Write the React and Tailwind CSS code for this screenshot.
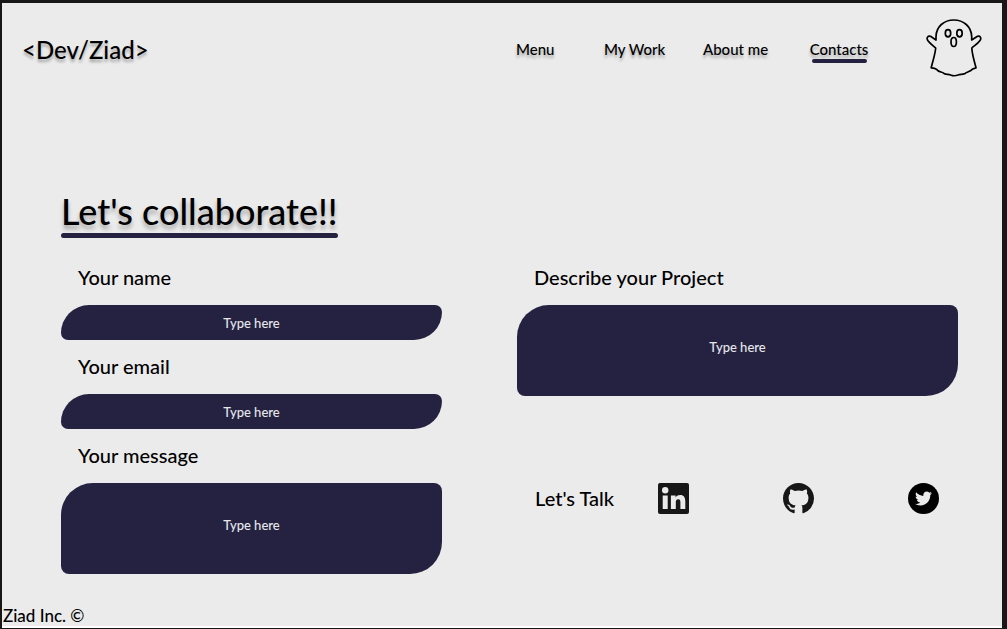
import { FaTwitter } from "react-icons/fa";
import { BsGithub } from "react-icons/bs";

const fieldShape =
  "block w-full resize-none appearance-none rounded-tl-[32px] rounded-tr-lg rounded-br-[32px] rounded-bl-lg bg-[#252241] text-center text-[13px] leading-5 text-white outline-none placeholder:text-gray-200";

function Field({ id, label, multiline }) {
  return (
    <div className="flex flex-col gap-4">
      <label htmlFor={id} className="pl-[17px] text-xl leading-6">
        {label}
      </label>
      {multiline ? (
        <textarea id={id} placeholder="Type here" className={`${fieldShape} h-[91px] px-6 pt-8`} />
      ) : (
        <input id={id} type="text" placeholder="Type here" className={`${fieldShape} h-[35px] px-6`} />
      )}
    </div>
  );
}

function Ghost() {
  return (
    <svg
      viewBox="0 0 56 58"
      className="h-[58px] w-14"
      fill="none"
      stroke="black"
      strokeWidth="1.7"
      strokeLinecap="round"
      strokeLinejoin="round"
      role="img"
      aria-label="Ghost"
    >
      <path d="M10 21V17.500C10.300 7.500 18 1 27.800 1S45.300 7.500 45.700 17.500V21L51.500 17.300C54 16.500 55.800 19 54 21.500C51.500 25 48.500 26.500 45.800 29C46.200 36 48.300 42 50 48.800C47.500 49.300 46 49.800 44.500 51.800C42 53.200 40.300 53 38.500 54.800C36 55.900 34 54.700 32 56C29.500 57 27 57 24.700 55.900C22.500 54.700 20.500 56 18 54.500C16.500 52.900 14 53.200 12 51.800C10.500 49.500 8.500 49 5.200 48.800C6.800 42 9 36 9.700 29C7 26.500 4.300 25 1.800 21.500C.2 19 1.800 16.500 4.500 17.300Z" />
      <ellipse cx="22" cy="14.200" rx="2.700" ry="3.600" />
      <ellipse cx="33.500" cy="14.200" rx="2.700" ry="3.600" />
      <ellipse cx="27.700" cy="23" rx="2.700" ry="4.500" />
    </svg>
  );
}

function LinkedIn() {
  return (
    <svg viewBox="0 0 31 31" className="h-[31px] w-[31px]" aria-hidden="true">
      <rect width="31" height="31" rx="2" fill="#171717" />
      <g fill="#ebebeb">
        <circle cx="7.200" cy="7.200" r="3.200" />
        <path d="M4.700 12.500H9.700V26H4.700Z" />
        <path d="M12.900 12.500H17.600V14.400C18.700 12.800 20.300 12.100 22.100 12.100C26 12.100 27.300 14.600 27.300 18.500V26H22.400V19.300C22.400 17.400 21.900 16.300 20.300 16.300C18.500 16.300 17.800 17.600 17.800 19.300V26H12.900Z" />
      </g>
    </svg>
  );
}

export default function App() {
  return (
    <div className="min-h-screen bg-[#171717] pt-[3px] pr-[5px] pb-px pl-[2px] font-['Lato','Liberation_Sans',sans-serif] font-medium text-black">
      <div className="flex min-h-[calc(100vh-4px)] flex-col border-b-2 border-white bg-[#ebebeb]">
        <header className="flex items-start pt-4 pr-5 pl-5">
          <a href="#home" className="pt-[15px] text-2xl leading-8 text-shadow-[0_3px_3px_rgb(0_0_0/0.3)]">
            &lt;Dev/Ziad&gt;
          </a>
          <nav className="ml-auto grid grid-cols-[88px_99px_104px_119px] pt-[18px] text-[15px] leading-6 text-shadow-[0_3px_3px_rgb(0_0_0/0.3)]">
            <a href="#menu">Menu</a>
            <a href="#work">My Work</a>
            <a href="#about">About me</a>
            <a href="#contacts" aria-current="page" className="flex w-16 flex-col items-center">
              Contacts
              <span className="-mt-0.5 h-1 w-[55px] rounded-full bg-[#252241]" />
            </a>
          </nav>
          <Ghost />
        </header>

        <main className="flex flex-col gap-[27px] pt-[112px] pr-11 pl-[59px]">
          <h1 className="w-fit text-4xl leading-[44px] text-shadow-[0_4px_4px_rgb(0_0_0/0.3)]">
            Let's collaborate!!
            <span className="block h-[5px] rounded-full bg-[#252241]" />
          </h1>
          <form className="grid grid-cols-[381fr_441fr] gap-[75px]">
            <div className="flex flex-col gap-3.5">
              <Field id="name" label="Your name" />
              <Field id="email" label="Your email" />
              <Field id="message" label="Your message" multiline />
            </div>
            <div className="flex flex-col gap-[86px]">
              <Field id="project" label="Describe your Project" multiline />
              <div className="flex items-center justify-between pr-[19px] pl-[18px]">
                <p className="text-xl leading-8">Let's Talk</p>
                <div className="flex items-center gap-[94px]">
                  <a href="#linkedin" aria-label="LinkedIn">
                    <LinkedIn />
                  </a>
                  <a href="#github" aria-label="GitHub">
                    <BsGithub className="h-[31px] w-[31px] text-[#171717]" />
                  </a>
                  <a
                    href="#twitter"
                    aria-label="Twitter"
                    className="flex h-[31px] w-[31px] items-center justify-center rounded-full bg-black"
                  >
                    <FaTwitter className="h-[17px] w-[17px] text-[#ebebeb]" />
                  </a>
                </div>
              </div>
            </div>
          </form>
        </main>

        <footer className="mt-auto pl-px text-[17px] leading-5">Ziad Inc. ©</footer>
      </div>
    </div>
  );
}
